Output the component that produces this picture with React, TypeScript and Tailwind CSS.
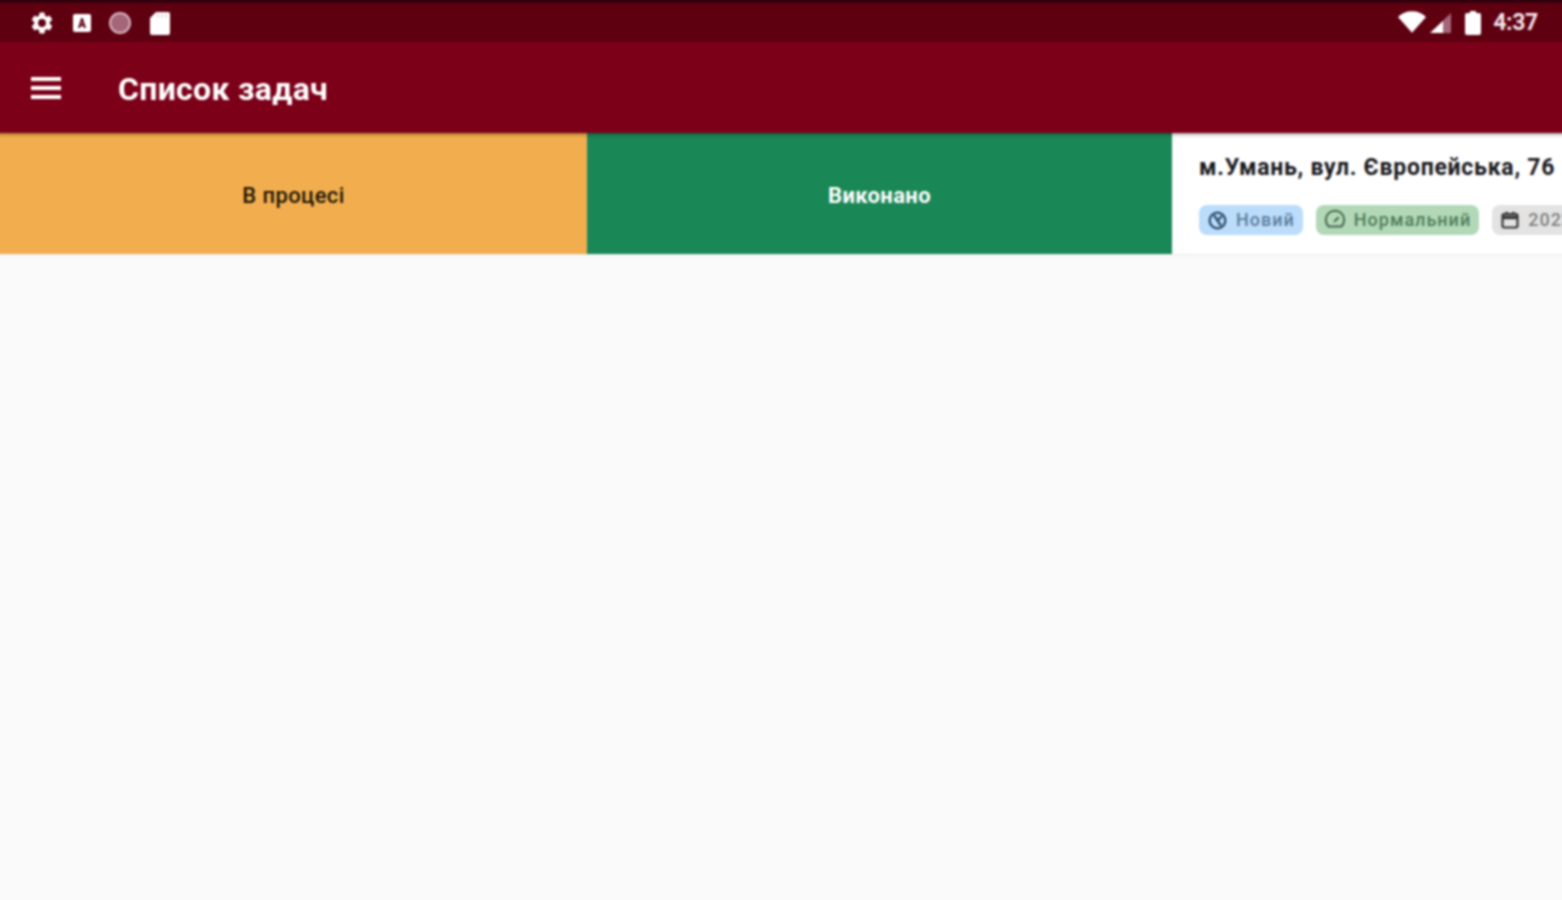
import React from "react";

const font = { fontFamily: "Roboto, 'Noto Sans', sans-serif" };

function Gear() {
  return (
    <svg width="26" height="26" viewBox="0 0 24 24" fill="#fff">
      <path d="M19.14 12.94c.04-.3.06-.61.06-.94s-.02-.64-.07-.94l2.03-1.58a.49.49 0 0 0 .12-.61l-1.92-3.32a.49.49 0 0 0-.59-.22l-2.39.96a7 7 0 0 0-1.62-.94l-.36-2.54a.48.48 0 0 0-.48-.41h-3.84a.48.48 0 0 0-.47.41l-.36 2.54c-.59.24-1.13.57-1.62.94l-2.39-.96a.48.48 0 0 0-.59.22L2.73 8.87a.48.48 0 0 0 .12.61l2.03 1.58c-.05.3-.08.63-.08.94s.02.64.07.94l-2.03 1.58a.49.49 0 0 0-.12.61l1.92 3.32c.12.22.37.29.59.22l2.39-.96c.5.38 1.03.7 1.62.94l.36 2.54c.05.24.24.41.48.41h3.84c.24 0 .44-.17.47-.41l.36-2.54c.59-.24 1.13-.56 1.62-.94l2.39.96c.22.08.47 0 .59-.22l1.92-3.32a.48.48 0 0 0-.12-.61zM12 15.6A3.6 3.6 0 1 1 12 8.4a3.6 3.6 0 0 1 0 7.2z" />
    </svg>
  );
}

function Chip({ bg, text, color, icon }: { bg: string; text: string; color: string; icon: React.ReactNode }) {
  return (
    <div className={`flex h-[30px] shrink-0 items-center gap-[8px] rounded-[8px] pl-[8px] pr-[8px] text-[18px] font-medium leading-none tracking-[1px] ${bg} ${color}`}>
      {icon}
      <span className="whitespace-nowrap">{text}</span>
    </div>
  );
}

export default function App() {
  return (
    <div className="h-[900px] w-[1562px] overflow-hidden bg-[#fafafa]" style={font}>
      <div className="-ml-[3px] -mt-[2px] flex h-[906px] w-[1568px] flex-col bg-[#fafafa] blur-[1px]">
        <div className="flex h-[44px] items-center justify-between bg-[#5f0011] bg-gradient-to-b from-[#120006] from-0% via-[#5f0011] via-15% to-[#5f0011] pl-[33px] pr-[27px] pt-[5px]">
          <div className="flex items-center">
            <div className="-ml-[1px]"><Gear /></div>
            <svg width="20" height="20" viewBox="0 0 20 20" className="ml-[17px]">
              <rect x="1" y="1" width="18" height="18" rx="2" fill="#fff" />
              <path d="M6 15 9.2 5h1.6L14 15h-2.2l-.6-2H8.8l-.6 2zM9.3 11h1.4L10 8.6z" fill="#5f0011" />
            </svg>
            <svg width="24" height="24" viewBox="0 0 24 24" className="ml-[16px]">
              <circle cx="12" cy="12" r="11" fill="#d8b4bd" />
              <circle cx="12" cy="12" r="9" fill="#a5667a" />
            </svg>
            <svg width="22" height="24" viewBox="0 0 22 24" className="ml-[17px]" fill="#fff">
              <path d="M7 1h12a2 2 0 0 1 2 2v19a2 2 0 0 1-2 2H3a2 2 0 0 1-2-2V7z" />
              <path d="M9 2v5M13 2v5M17 2v5" stroke="#d8c0c5" strokeWidth="1" />
            </svg>
          </div>
          <div className="flex items-center">
            <svg width="28" height="23" viewBox="0 0 30 24" fill="#fff">
              <path d="M15 23 0 6C4 2 9 0 15 0s11 2 15 6z" />
            </svg>
            <svg width="24" height="24" viewBox="0 0 24 24" className="ml-[3px] mt-[1px]">
              <path d="M22 2v20H1z" fill="#a5667a" />
              <path d="M14 10v12H1z" fill="#fff" />
            </svg>
            <svg width="16" height="24" viewBox="0 0 16 24" fill="#fff" className="ml-[12px]">
              <path d="M5 0h6v2h3a2 2 0 0 1 2 2v18a2 2 0 0 1-2 2H2a2 2 0 0 1-2-2V4a2 2 0 0 1 2-2h3z" />
            </svg>
            <span className="ml-[12px] text-[23px] font-bold leading-none tracking-[-0.3px] text-[#f4e4e7]">4:37</span>
          </div>
        </div>

        <header className="relative z-10 flex h-[91px] items-center bg-[#7d0019] pl-[34px] shadow-[0_2px_3px_rgba(0,0,0,0.3)]">
          <div className="flex w-[30px] flex-col gap-[5px]">
            <div className="h-[4px] bg-white" />
            <div className="h-[4px] bg-white" />
            <div className="h-[4px] bg-white" />
          </div>
          <h1 className="ml-[57px] mt-[3px] text-[32px] font-bold leading-none tracking-[0.3px] text-white">Список задач</h1>
        </header>

        <div className="flex h-[122px] w-full border-b border-[#e8e8e8]">
          <div className="flex w-[590px] shrink-0 items-center justify-center bg-[#f2ae4e] pl-[3px] pt-[3px] text-[22px] font-medium tracking-[0.4px] text-[#1f1608]">В процесі</div>
          <div className="flex w-[585px] shrink-0 items-center justify-center bg-[#1a8757] pt-[3px] text-[22px] font-bold tracking-[0.4px] text-white">Виконано</div>
          <div className="min-w-0 flex-1 overflow-hidden bg-white pl-[27px] pt-[21px]">
            <div className="whitespace-nowrap text-[23px] font-bold leading-[27px] tracking-[0.75px] text-[#1a1a1e]">м.Умань, вул. Європейська, 76</div>
            <div className="mt-[24px] flex gap-[13px]">
              <Chip bg="bg-[#bbdcfb]" color="text-[#5d7d9c]" text="Новий" icon={
                <svg width="21" height="21" viewBox="0 0 24 24" fill="none" stroke="#2d4a6c" strokeWidth="2.6"><circle cx="12" cy="12" r="9" /><path d="M12 12 8 6M12 12l4 6M12 12l5-5" /></svg>
              } />
              <Chip bg="bg-[#b2d8b7]" color="text-[#4f7d5a]" text="Нормальний" icon={
                <svg width="22" height="22" viewBox="0 0 24 24" fill="none" stroke="#46674e" strokeWidth="2.2"><path d="M5 19a10 10 0 1 1 14 0z" /><path d="m11 14 5-5" /></svg>
              } />
              <Chip bg="bg-[#e3e3e3]" color="text-[#808080]" text="2023-01-01" icon={
                <svg width="20" height="20" viewBox="0 0 24 24" fill="none" stroke="#333" strokeWidth="2.6"><rect x="3" y="5" width="18" height="16" rx="2" /><path d="M3 9h18" strokeWidth="4" /><path d="M8 2v4M16 2v4" /></svg>
              } />
            </div>
          </div>
        </div>
      </div>
    </div>
  );
}
